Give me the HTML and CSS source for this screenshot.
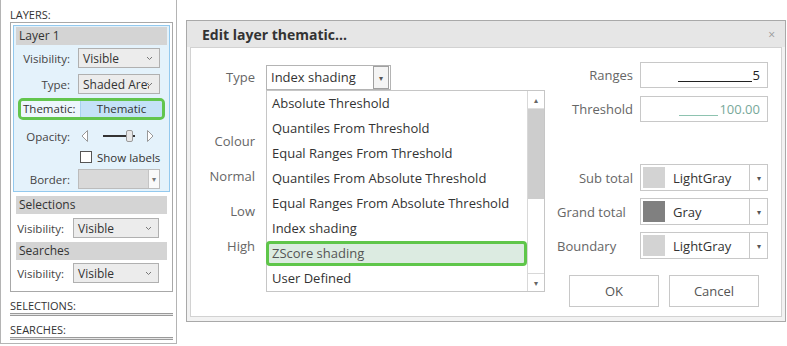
FILE: index.html
```html
<!DOCTYPE html>
<html lang="en">
<head>
  <meta charset="UTF-8">
  <title>Edit layer thematic</title>
  <link rel="stylesheet" href="styles.css">
</head>
<body>

  <div class="side">
    <div class="cap">LAYERS:</div>
    <div class="group">
      <div class="layer">
        <div class="head">Layer 1</div>
        <div class="row first">
          <span class="lbl">Visibility:</span>
          <div class="sel">Visible<svg class="chev" width="7" height="5" viewBox="0 0 7 5"><path d="M1 1l2.5 2.5L6 1" fill="none" stroke="#777" stroke-width="1"/></svg></div>
        </div>
        <div class="row">
          <span class="lbl">Type:</span>
          <div class="sel"><span class="clip">Shaded Area</span><svg class="chev" width="7" height="5" viewBox="0 0 7 5"><path d="M1 1l2.5 2.5L6 1" fill="none" stroke="#777" stroke-width="1"/></svg></div>
        </div>
        <div class="thematic">
          <span class="th-lbl">Thematic:</span>
          <span class="th-btn">Thematic</span>
        </div>
        <div class="row">
          <span class="lbl">Opacity:</span>
          <svg class="slider" width="76" height="14" viewBox="0 0 76 14">
            <path d="M9.5 1.5L4 7l5.5 5.5z" fill="#fff" stroke="#999"/>
            <rect x="25" y="6" width="32" height="2" fill="#333"/>
            <rect x="48.5" y="1.5" width="6" height="11" rx="1.5" fill="#e8e8e8" stroke="#999"/>
            <path d="M69.5 1.5L75 7l-5.5 5.5z" fill="#fff" stroke="#999"/>
          </svg>
        </div>
        <div class="row check-row">
          <span class="box"></span>
          <span>Show labels</span>
        </div>
        <div class="row">
          <span class="lbl">Border:</span>
          <div class="sel dis"><span class="btn-dd">&#9662;</span></div>
        </div>
      </div>

      <div class="head sub">Selections</div>
      <div class="row narrow">
        <span class="lbl">Visibility:</span>
        <div class="sel">Visible<svg class="chev" width="7" height="5" viewBox="0 0 7 5"><path d="M1 1l2.5 2.5L6 1" fill="none" stroke="#777" stroke-width="1"/></svg></div>
      </div>

      <div class="head sub">Searches</div>
      <div class="row narrow tight">
        <span class="lbl">Visibility:</span>
        <div class="sel">Visible<svg class="chev" width="7" height="5" viewBox="0 0 7 5"><path d="M1 1l2.5 2.5L6 1" fill="none" stroke="#777" stroke-width="1"/></svg></div>
      </div>
    </div>

    <div class="cap small">SELECTIONS:</div>
    <div class="rule"></div>
    <div class="cap small">SEARCHES:</div>
    <div class="rule"></div>
  </div>

  <div class="dialog">
    <div class="title">
      <span>Edit layer thematic...</span>
      <span class="close">&#215;</span>
    </div>
    <div class="frame">
      <div class="panel">
        <div class="left">
          <div class="frow type-row">
            <span class="flbl">Type</span>
            <div class="combo">
              <span>Index shading</span>
              <span class="combo-btn">&#9662;</span>
            </div>
          </div>
          <div class="frow colour"><span class="flbl">Colour</span></div>
          <div class="frow"><span class="flbl">Normal</span></div>
          <div class="frow"><span class="flbl">Low</span></div>
          <div class="frow high"><span class="flbl">High</span></div>

          <div class="list">
            <div class="items">
              <div class="item">Absolute Threshold</div>
              <div class="item">Quantiles From Threshold</div>
              <div class="item">Equal Ranges From Threshold</div>
              <div class="item">Quantiles From Absolute Threshold</div>
              <div class="item">Equal Ranges From Absolute Threshold</div>
              <div class="item">Index shading</div>
              <div class="item picked">ZScore shading</div>
              <div class="item">User Defined</div>
            </div>
            <div class="scroll">
              <span class="arrow">&#9652;</span>
              <span class="thumb"></span>
              <span class="track"></span>
              <span class="arrow">&#9662;</span>
            </div>
          </div>
        </div>

        <div class="right">
          <div class="grid">
            <span class="rlbl">Ranges</span>
            <div class="field"><span class="mask"></span>5</div>
            <span class="rlbl">Threshold</span>
            <div class="field teal"><span class="mask short"></span>100.00</div>
          </div>

          <div class="grid colours">
            <span class="rlbl">Sub total</span>
            <div class="cpick"><span class="swatch"></span><span class="cname">LightGray</span><span class="cbtn">&#9662;</span></div>
            <span class="rlbl lft">Grand total</span>
            <div class="cpick"><span class="swatch dark"></span><span class="cname">Gray</span><span class="cbtn">&#9662;</span></div>
            <span class="rlbl lft">Boundary</span>
            <div class="cpick"><span class="swatch"></span><span class="cname">LightGray</span><span class="cbtn">&#9662;</span></div>
          </div>

          <div class="buttons">
            <button>OK</button>
            <button>Cancel</button>
          </div>
        </div>
      </div>
    </div>
  </div>

</body>
</html>
```

FILE: styles.css
```css
body {
  margin: 0;
  font-family: "Open Sans", "Noto Sans", sans-serif;
  font-size: 12px;
  color: #333;
  background: #fff;
  display: flex;
  align-items: flex-start;
}

/* ---------- left layers panel ---------- */

.side {
  width: 177px;
  height: 344px;
  box-sizing: border-box;
  border: 1px solid #b4b4b4;
  border-top: none;
  font-size: 11px;
}

.cap {
  padding: 7px 0 0 9px;
  height: 15px;
  line-height: 15px;
  font-size: 11px;
  color: #333;
}

.cap.small {
  padding-top: 6px;
  height: 14px;
}

.rule {
  margin: 1px 3px 0 9px;
  height: 1px;
  border-top: 1px solid #9a9a9a;
  border-bottom: 1px solid #9a9a9a;
  background: #e6e6e6;
}

.group {
  margin: 0 3px 0 9px;
  border: 1px solid #a8a8a8;
  padding: 2px 2px 8px;
}

.layer {
  border: 1px solid #93c9ee;
  background: #e4f2fb;
  padding: 1px 2px 2px;
}

.head {
  background: #d4d4d4;
  height: 18px;
  line-height: 18px;
  padding-left: 3px;
  font-size: 12px;
  color: #333;
}

.head.sub {
  margin: 4px 3px 0 3px;
}

.row {
  display: flex;
  align-items: center;
  height: 20px;
  margin-top: 6px;
}

.row.first {
  margin-top: 3px;
}

.lbl {
  width: 54px;
  margin-right: 8px;
  text-align: right;
  color: #444;
  font-size: 11.5px;
}

.narrow .lbl {
  width: 51px;
  margin-right: 9px;
}

.narrow {
  margin-top: 4px;
}

.narrow .sel {
  width: 86px;
}

.narrow.tight {
  margin-top: 3px;
}

.sel {
  position: relative;
  width: 82px;
  height: 20px;
  box-sizing: border-box;
  border: 1px solid #b0b0b0;
  background: #ececec;
  display: flex;
  align-items: center;
  padding-left: 4px;
  font-size: 12px;
  color: #333;
  overflow: hidden;
}

.clip {
  white-space: nowrap;
  overflow: hidden;
  width: 66px;
}

.chev {
  position: absolute;
  right: 6px;
  top: 7px;
}

.sel.dis {
  background: #d9d9d9;
  border-color: #bcbcbc;
}

.btn-dd {
  position: absolute;
  right: 0;
  top: 0;
  width: 10px;
  height: 18px;
  background: #fafafa;
  border-left: 1px solid #c4c4c4;
  color: #777;
  font-size: 8px;
  line-height: 18px;
  text-align: center;
}

.thematic {
  display: flex;
  height: 16px;
  margin: 4px 2px 0;
  border: 3px solid #62c54d;
  border-radius: 5px;
  line-height: 16px;
  font-size: 11.5px;
  overflow: hidden;
}

.th-lbl {
  width: 57px;
  padding-left: 2px;
  background: #edf6fc;
  color: #333;
}

.th-btn {
  flex: 1;
  background: #c4e2f7;
  border-left: 1px solid #a8d2ee;
  text-align: center;
  color: #333;
}

.slider {
  margin-left: 0;
}

.check-row {
  margin-top: 2px;
  height: 18px;
  padding-left: 64px;
  font-size: 11.5px;
}

.box {
  width: 10px;
  height: 10px;
  border: 1px solid #555;
  background: #fff;
  margin-right: 5px;
}

.check-row + .row {
  margin-top: 3px;
}

/* ---------- dialog ---------- */

.dialog {
  margin: 20px 0 0 9px;
  width: 600px;
  height: 302px;
  box-sizing: border-box;
  border: 1px solid #a9a9a9;
  background: #f2f2f2;
  display: flex;
  flex-direction: column;
}

.title {
  height: 26px;
  background: #e6e6e6;
  display: flex;
  align-items: center;
  justify-content: space-between;
  padding: 0 10px 0 15px;
  font-size: 14px;
  font-weight: bold;
  color: #333;
}

.close {
  font-weight: normal;
  font-size: 12px;
  color: #999;
}

.frame {
  flex: 1;
  padding: 0 3px 4px 3px;
}

.panel {
  position: relative;
  height: 100%;
  box-sizing: border-box;
  border: 1px solid #d2d2d2;
  background: #fff;
  display: flex;
}

.left {
  position: relative;
  width: 362px;
}

.frow {
  display: flex;
  align-items: center;
  height: 35px;
}

.flbl {
  width: 64px;
  text-align: right;
  color: #666;
  font-size: 13px;
}

.type-row {
  margin-top: 16px;
  height: 26px;
}

.colour {
  margin-top: 33px;
}

.combo {
  margin-left: 11px;
  width: 125px;
  height: 25px;
  box-sizing: border-box;
  border: 1px solid #b4b4b4;
  display: flex;
  align-items: center;
  justify-content: space-between;
  padding-left: 4px;
  font-size: 13px;
  color: #333;
}

.combo-btn {
  width: 14px;
  height: 21px;
  margin-right: 1px;
  border: 1px solid #a0a0a0;
  background: #f4f4f4;
  color: #555;
  font-size: 8px;
  line-height: 21px;
  text-align: center;
}

/* open dropdown of the Type combo */
.list {
  position: absolute;
  left: 75px;
  top: 42px;
  width: 279px;
  height: 202px;
  box-sizing: border-box;
  border: 1px solid #c6c6c6;
  background: #fff;
  display: flex;
}

.items {
  flex: 1;
}

.item {
  height: 25px;
  line-height: 24px;
  padding-left: 5px;
  font-size: 13px;
  color: #333;
  white-space: nowrap;
  overflow: hidden;
}

.item.picked {
  height: 19px;
  line-height: 19px;
  margin: 0 0 0 -1px;
  padding-left: 3px;
  border: 3px solid #5fc64a;
  border-radius: 4px;
  background: #dcebe1;
  color: #555;
}

.scroll {
  width: 16px;
  display: flex;
  flex-direction: column;
  border-left: 1px solid #d8d8d8;
}

.arrow {
  height: 17px;
  font-size: 8px;
  line-height: 17px;
  text-align: center;
  color: #666;
  border-bottom: 1px solid #e0e0e0;
}

.arrow:last-child {
  border-bottom: none;
  border-top: 1px solid #d8d8d8;
}

.thumb {
  height: 90px;
  background: #cdcdcd;
}

.track {
  flex: 1;
}

/* right column */
.right {
  flex: 1;
  padding: 14px 0 0 0;
}

.grid {
  display: grid;
  grid-template-columns: 80px 128px;
  column-gap: 7px;
  row-gap: 8px;
  align-items: center;
}

.rlbl {
  text-align: right;
  color: #666;
  font-size: 13px;
}

.rlbl.lft {
  text-align: left;
  padding-left: 4px;
}

.field {
  height: 26px;
  box-sizing: border-box;
  border: 1px solid #c8c8c8;
  display: flex;
  align-items: center;
  justify-content: flex-end;
  padding-right: 7px;
  font-size: 13px;
  color: #222;
}

.mask {
  width: 74px;
  height: 12px;
  border-bottom: 1px solid #222;
  margin-right: 1px;
}

.field.teal {
  color: #78a89a;
}

.mask.short {
  width: 39px;
  border-bottom-color: #8ec3b0;
}

.colours {
  margin-top: 42px;
  row-gap: 7px;
}

.cpick {
  height: 27px;
  box-sizing: border-box;
  border: 1px solid #c8c8c8;
  display: flex;
  align-items: center;
  font-size: 13px;
  color: #333;
}

.swatch {
  width: 22px;
  height: 21px;
  margin-left: 2px;
  background: #d3d3d3;
}

.swatch.dark {
  background: #808080;
}

.cname {
  flex: 1;
  padding-left: 8px;
}

.cbtn {
  width: 17px;
  height: 100%;
  border-left: 1px solid #c8c8c8;
  text-align: center;
  line-height: 25px;
  font-size: 8px;
  color: #555;
}

.buttons {
  display: flex;
  gap: 10px;
  margin: 16px 0 0 16px;
}

button {
  width: 90px;
  height: 32px;
  border: 1px solid #c8c8c8;
  background: #fff;
  font-family: inherit;
  font-size: 13px;
  color: #555;
}
```
